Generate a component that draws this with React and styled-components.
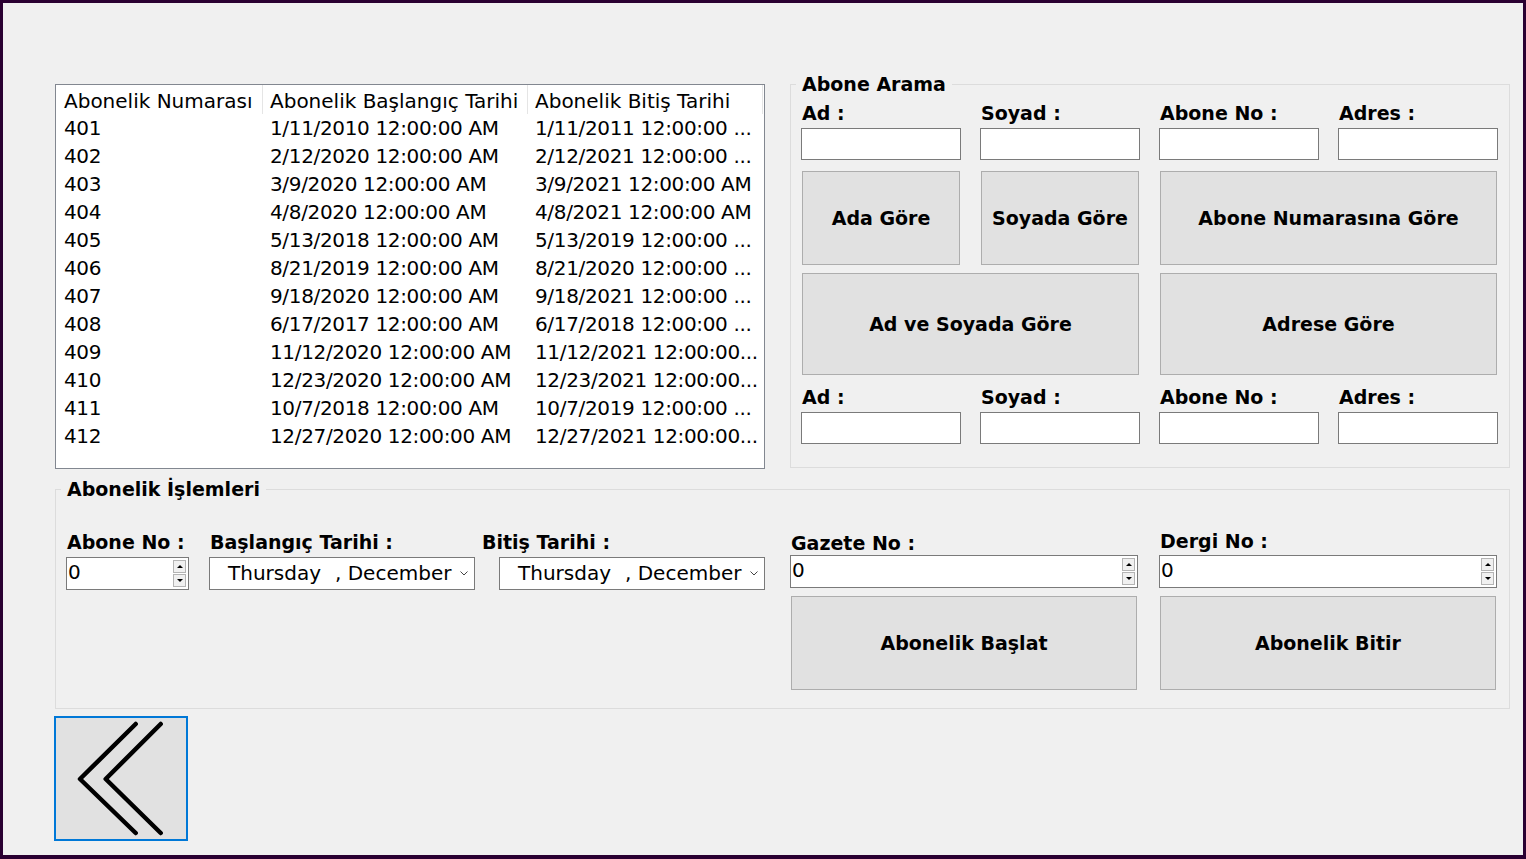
import React from "react"
import styled, { createGlobalStyle } from "styled-components"

const GlobalStyle = createGlobalStyle`
  body {
    margin: 0;
    font-family: "DejaVu Sans", "Liberation Sans", sans-serif;
    color: #000;
  }
`

const rows = [
  ["401", "1/11/2010 12:00:00 AM", "1/11/2011 12:00:00 ..."],
  ["402", "2/12/2020 12:00:00 AM", "2/12/2021 12:00:00 ..."],
  ["403", "3/9/2020 12:00:00 AM", "3/9/2021 12:00:00 AM"],
  ["404", "4/8/2020 12:00:00 AM", "4/8/2021 12:00:00 AM"],
  ["405", "5/13/2018 12:00:00 AM", "5/13/2019 12:00:00 ..."],
  ["406", "8/21/2019 12:00:00 AM", "8/21/2020 12:00:00 ..."],
  ["407", "9/18/2020 12:00:00 AM", "9/18/2021 12:00:00 ..."],
  ["408", "6/17/2017 12:00:00 AM", "6/17/2018 12:00:00 ..."],
  ["409", "11/12/2020 12:00:00 AM", "11/12/2021 12:00:00..."],
  ["410", "12/23/2020 12:00:00 AM", "12/23/2021 12:00:00..."],
  ["411", "10/7/2018 12:00:00 AM", "10/7/2019 12:00:00 ..."],
  ["412", "12/27/2020 12:00:00 AM", "12/27/2021 12:00:00..."],
]

const Window = styled.div`
  width: 1526px;
  height: 859px;
  box-sizing: border-box;
  border: 3px solid #2a0032;
  border-bottom-width: 4px;
  background: #f0f0f0;
  padding: 72px 13px 0 52px;
  display: flex;
  flex-direction: column;
`

const TopRow = styled.div`
  display: flex;
  align-items: flex-start;
  gap: 25px;
`

const ListView = styled.div`
  margin-top: 9px;
  width: 710px;
  height: 385px;
  box-sizing: border-box;
  border: 1px solid #828790;
  background: #fff;
  display: grid;
  grid-template-columns: 207px 265px 235px;
  grid-auto-rows: 28px;
  align-content: start;
  font-size: 20px;
  line-height: 28px;
`

const HeadCell = styled.div`
  height: 29px;
  line-height: 29px;
  padding: 2px 0 0 ${(p) => p.pad || 7}px;
  box-sizing: border-box;
  border-right: 1px solid #e5e5e5;
  white-space: nowrap;
  overflow: hidden;
`

const Cell = styled.div`
  padding-left: ${(p) => p.pad || 7}px;
  white-space: nowrap;
  overflow: hidden;
  margin-top: 1px;
  letter-spacing: -0.35px;
`

const Group = styled.fieldset`
  margin: ${(p) => p.top || 0}px 0 0 0;
  padding: 0 ${(p) => p.right}px 0 ${(p) => p.left}px;
  border: 1px solid #dcdcdc;
  width: ${(p) => p.w}px;
  height: ${(p) => p.h}px;
  box-sizing: border-box;
  min-width: 0;
`

const Legend = styled.legend`
  margin-left: -5px;
  padding: 0 6px;
  font-weight: bold;
  font-size: 19px;
  line-height: 18px;
`

const SearchGrid = styled.div`
  display: grid;
  grid-template-columns: repeat(4, 160px);
  column-gap: 19px;
  padding-top: 10px;
`

const Label = styled.div`
  font-weight: bold;
  font-size: 19px;
  line-height: 20px;
  padding-left: 1px;
  white-space: nowrap;
  margin-top: ${(p) => p.top || 0}px;
`

const TextBox = styled.input`
  height: 32px;
  box-sizing: border-box;
  border: 1px solid #7a7a7a;
  background: #fff;
  margin: 5px 0 0 0;
  padding: 0;
  width: 100%;
  outline: none;
`

const Button = styled.button`
  grid-column: span ${(p) => p.span || 1};
  height: ${(p) => p.h}px;
  margin: ${(p) => p.top || 0}px 1px 0 1px;
  background: #e1e1e1;
  border: 1px solid #adadad;
  font-family: inherit;
  font-weight: bold;
  font-size: 19px;
  color: #000;
  padding: 0;
`

const OpsBody = styled.div`
  display: flex;
  padding-top: 34px;
`

const LeftFields = styled.div`
  display: flex;
  align-items: flex-start;
`

const Field = styled.div`
  display: flex;
  flex-direction: column;
  width: ${(p) => p.w}px;
  margin-right: ${(p) => p.gap || 0}px;
`

const Control = styled.div`
  margin-top: 5px;
  margin-left: ${(p) => p.indent || 0}px;
  height: 33px;
  box-sizing: border-box;
  border: 1px solid #7a7a7a;
  background: #fff;
  display: flex;
  align-items: center;
  font-size: 20px;
  white-space: nowrap;
`

const NumText = styled.span`
  flex: 1;
  padding-left: 1px;
  margin-top: -4px;
`

const Spin = styled.div`
  display: flex;
  flex-direction: column;
  align-self: stretch;
  width: 13px;
  margin: 2px 2px 2px 0;
  gap: 1px;
`

const SpinBtn = styled.span`
  flex: 1;
  background: #f0f0f0;
  border: 1px solid #b4b4b4;
  display: flex;
  align-items: center;
  justify-content: center;
  &::after {
    content: "";
    border-left: 3px solid transparent;
    border-right: 3px solid transparent;
    ${(p) => (p.down ? "border-top: 3px solid #000;" : "border-bottom: 3px solid #000;")}
  }
`

const DateText = styled.span`
  padding-left: 18px;
  flex: 1;
  margin-top: -2px;
`

const Month = styled.span`
  margin-left: 14px;
`

const Chevron = styled.svg`
  margin-right: 6px;
`

const RightGrid = styled.div`
  margin-left: 25px;
  display: grid;
  grid-template-columns: 348px 338px;
  column-gap: 21px;
  margin-top: -1px;
`

const GridControl = styled(Control)`
  margin-top: 2px;
`

const BackButton = styled.button`
  margin: 7px 0 0 -1px;
  width: 134px;
  height: 125px;
  box-sizing: border-box;
  border: 2px solid #0078d7;
  background: #e1e1e1;
  padding: 0;
  display: block;
`

const Numeric = ({ indent }) => (
  <Control indent={indent}>
    <NumText>0</NumText>
    <Spin>
      <SpinBtn />
      <SpinBtn down />
    </Spin>
  </Control>
)

const DatePicker = ({ indent }) => (
  <Control indent={indent}>
    <DateText>
      Thursday<Month>, December</Month>
    </DateText>
    <Chevron width="8" height="5" viewBox="0 0 8 5">
      <path d="M0.5 0.5 L4 4 L7.5 0.5" fill="none" stroke="#444" strokeWidth="1" />
    </Chevron>
  </Control>
)

const App = () => {
  return (
    <Window>
      <GlobalStyle />
      <TopRow>
        <ListView>
          <HeadCell pad={8}>Abonelik Numarası</HeadCell>
          <HeadCell>Abonelik Başlangıç Tarihi</HeadCell>
          <HeadCell>Abonelik Bitiş Tarihi</HeadCell>
          {rows.map((r) => (
            <React.Fragment key={r[0]}>
              <Cell pad={8}>{r[0]}</Cell>
              <Cell>{r[1]}</Cell>
              <Cell>{r[2]}</Cell>
            </React.Fragment>
          ))}
        </ListView>

        <Group w={720} h={393} left={10} right={11}>
          <Legend>Abone Arama</Legend>
          <SearchGrid>
            <Label>Ad :</Label>
            <Label>Soyad :</Label>
            <Label>Abone No :</Label>
            <Label>Adres :</Label>
            <TextBox />
            <TextBox />
            <TextBox />
            <TextBox />
            <Button h={94} top={11}>Ada Göre</Button>
            <Button h={94} top={11}>Soyada Göre</Button>
            <Button h={94} top={11} span={2}>Abone Numarasına Göre</Button>
            <Button h={102} top={8} span={2}>Ad ve Soyada Göre</Button>
            <Button h={102} top={8} span={2}>Adrese Göre</Button>
            <Label top={12}>Ad :</Label>
            <Label top={12}>Soyad :</Label>
            <Label top={12}>Abone No :</Label>
            <Label top={12}>Adres :</Label>
            <TextBox />
            <TextBox />
            <TextBox />
            <TextBox />
          </SearchGrid>
        </Group>
      </TopRow>

      <Group top={11} w={1455} h={229} left={10} right={12}>
        <Legend>Abonelik İşlemleri</Legend>
        <OpsBody>
          <LeftFields>
            <Field w={123} gap={20}>
              <Label>Abone No :</Label>
              <Numeric />
            </Field>
            <Field w={266} gap={6}>
              <Label>Başlangıç Tarihi :</Label>
              <DatePicker />
            </Field>
            <Field w={284}>
              <Label>Bitiş Tarihi :</Label>
              <DatePicker indent={18} />
            </Field>
          </LeftFields>
          <RightGrid>
            <Label top={2}>Gazete No :</Label>
            <Label>Dergi No :</Label>
            <GridControl>
              <NumText>0</NumText>
              <Spin>
                <SpinBtn />
                <SpinBtn down />
              </Spin>
            </GridControl>
            <GridControl>
              <NumText>0</NumText>
              <Spin>
                <SpinBtn />
                <SpinBtn down />
              </Spin>
            </GridControl>
            <Button h={94} top={8}>Abonelik Başlat</Button>
            <Button h={94} top={8}>Abonelik Bitir</Button>
          </RightGrid>
        </OpsBody>
      </Group>

      <BackButton>
        <svg width="130" height="121" viewBox="0 0 130 121">
          <path
            d="M79.7 6 L24 61 L79.7 115 M104.7 6 L49.7 61 L104.7 115"
            fill="none"
            stroke="#000"
            strokeWidth="4.5"
            strokeLinecap="round"
            strokeLinejoin="round"
          />
        </svg>
      </BackButton>
    </Window>
  )
}

export default App
